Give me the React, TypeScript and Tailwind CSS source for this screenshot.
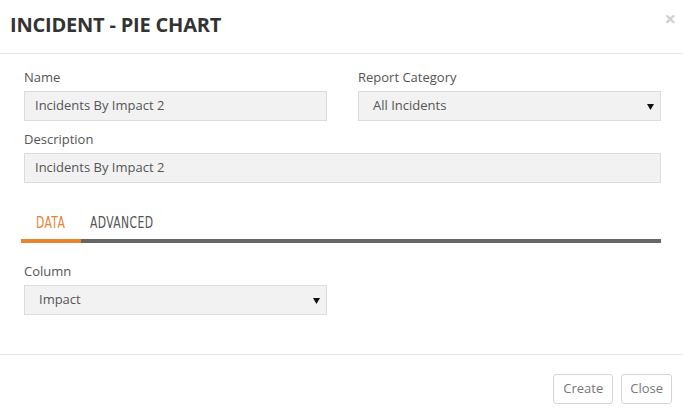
import React from 'react';

function Caret() {
  return (
    <svg width="7" height="7" viewBox="0 0 7 7" className="text-[#111]">
      <path d="M0 1h7L3.5 7z" fill="currentColor" />
    </svg>
  );
}

function Field({ label, value, select }: { label: string; value: string; select?: boolean }) {
  return (
    <div className="flex flex-col">
      <label className="text-[13px] leading-[18px] text-[#555] mb-[5px]">{label}</label>
      <div
        className={
          select
            ? 'h-[30px] bg-[#f2f2f2] border border-[#dcdcdc] flex items-center justify-between pl-[14px] pr-[6px] text-[13px] text-[#555]'
            : 'h-[30px] bg-[#f2f2f2] border border-[#dcdcdc] flex items-center pl-[10px] text-[13px] text-[#555]'
        }
      >
        <span>{value}</span>
        {select && <Caret />}
      </div>
    </div>
  );
}

export default function App() {
  return (
    <div className="w-[683px] h-[415px] bg-white flex flex-col font-['Open_Sans',sans-serif] overflow-hidden">
      {/* Header */}
      <div className="h-[54px] border-b border-[#e5e5e5] flex items-center justify-between pl-[10px] pr-[7px] shrink-0">
        <h1 className="text-[20px] font-bold text-[#333] tracking-[-0.2px] mt-[-4px]">INCIDENT - PIE CHART</h1>
        <span className="text-[20px] font-bold text-[#cfcfcf] leading-none mt-[-16px]">×</span>
      </div>

      {/* Body */}
      <div className="pl-[24px] pr-[22px] pt-[14px] flex-1">
        <div className="grid grid-cols-2 gap-x-[31px]">
          <Field label="Name" value="Incidents By Impact 2" />
          <Field label="Report Category" value="All Incidents" select />
        </div>
        <div className="mt-[9px]">
          <Field label="Description" value="Incidents By Impact 2" />
        </div>

        {/* Tabs */}
        <div className="mt-[31px] ml-[-3px] flex flex-col">
          <div className="flex h-[25px] font-['DejaVu_Sans_Condensed','DejaVu_Sans',sans-serif] text-[15px] leading-[18px]">
            <div className="w-[60px] pl-[15px]">
              <span className="inline-block origin-left scale-x-[0.8] text-[#e58436] tracking-[0.5px]">DATA</span>
            </div>
            <div className="pl-[9px]">
              <span className="inline-block origin-left scale-x-[0.8] text-[#555] tracking-[0.5px]">ADVANCED</span>
            </div>
          </div>
          <div className="flex h-[4px]">
            <div className="w-[60px] bg-[#e8862e]" />
            <div className="flex-1 bg-[#666]" />
          </div>
        </div>

        <div className="mt-[19px] grid grid-cols-2 gap-x-[31px]">
          <Field label="Column" value="Impact" select />
        </div>
      </div>

      {/* Footer */}
      <div className="h-[61px] border-t border-[#e5e5e5] flex items-start justify-end gap-[8px] pt-[19px] pr-[11px] shrink-0">
        <button className="h-[30px] px-[9px] border border-[#d5d5d5] rounded-[3px] text-[13px] text-[#777] bg-white">Create</button>
        <button className="h-[30px] px-[8px] border border-[#d5d5d5] rounded-[3px] text-[13px] text-[#777] bg-white">Close</button>
      </div>
    </div>
  );
}
